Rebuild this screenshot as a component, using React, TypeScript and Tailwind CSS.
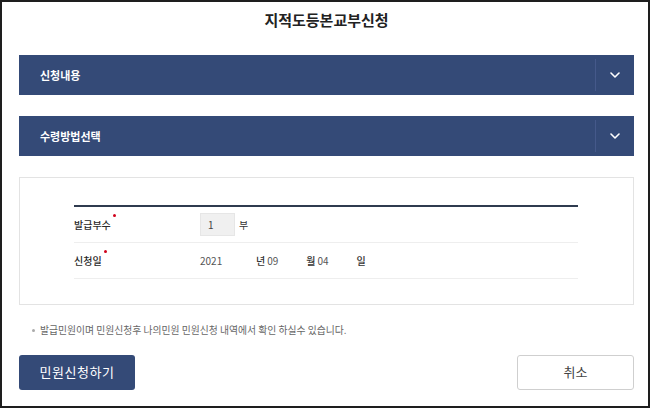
const font = "font-['Noto_Sans_CJK_KR','Noto_Sans',sans-serif]";

function Chevron() {
  return (
    <svg width="10" height="6" viewBox="0 0 10 6" fill="none">
      <path d="M1 1l4 4 4-4" stroke="white" strokeWidth="1.6" strokeLinecap="round" strokeLinejoin="round" />
    </svg>
  );
}

function Bar({ title }: { title: string }) {
  return (
    <div className="h-[40px] bg-[#344a77] flex items-center">
      <span className="flex-1 pl-[21px] text-[11px] font-bold text-white">{title}</span>
      <div className="h-[32px] w-px bg-[#45598a]" />
      <div className="w-[38px] flex justify-center">
        <Chevron />
      </div>
    </div>
  );
}

function Label({ text }: { text: string }) {
  return (
    <div className="w-[126px] text-[10px] font-medium text-[#2a2a2a]">
      <span className="relative">
        {text}
        <span className="absolute -right-[5px] -top-[3px] w-[3px] h-[3px] rounded-full bg-[#d0021b]" />
      </span>
    </div>
  );
}

export default function App() {
  return (
    <div className={`w-[650px] h-[408px] border-2 border-[#1e1e1e] bg-white pl-[17px] pr-[14px] ${font}`}>
      {/* 제목 */}
      <h1 className="mt-[6px] h-[24px] leading-[24px] text-center text-[15px] font-bold text-[#222]">
        지적도등본교부신청
      </h1>

      <div className="mt-[23px] flex flex-col gap-[21px]">
        <Bar title="신청내용" />
        <Bar title="수령방법선택" />
      </div>

      {/* 입력 영역 */}
      <div className="mt-[21px] h-[128px] border border-[#e3e3e3] pl-[54px] pr-[55px] pt-[27px]">
        <div className="border-t-2 border-[#2f3b4f]">
          <div className="h-[36px] flex items-center border-b border-[#eeeeee]">
            <Label text="발급부수" />
            <div className="w-[35px] h-[23px] bg-[#f0f0f0] border border-[#e6e6e6] flex items-center pl-[7px] text-[10px] text-[#444]">
              1
            </div>
            <span className="ml-[4px] text-[10px] text-[#333]">부</span>
          </div>
          <div className="h-[36px] flex items-center border-b border-[#eeeeee]">
            <Label text="신청일" />
            <span className="w-[56px] text-[10px] text-[#555]">2021</span>
            <span className="text-[10px] font-medium text-[#333]">년</span>
            <span className="ml-[2px] w-[39px] text-[10px] text-[#555]">09</span>
            <span className="text-[10px] font-medium text-[#333]">월</span>
            <span className="ml-[2px] w-[39px] text-[10px] text-[#555]">04</span>
            <span className="text-[10px] font-medium text-[#333]">일</span>
          </div>
        </div>
      </div>

      {/* 안내 */}
      <p className="mt-[18px] pl-[13px] text-[9.8px] text-[#666] flex items-center gap-[5px]">
        <span className="w-[3px] h-[3px] rounded-full bg-[#aaa]" />
        발급민원이며 민원신청후 나의민원 민원신청 내역에서 확인 하실수 있습니다.
      </p>

      {/* 버튼 */}
      <div className="mt-[17px] flex justify-between">
        <button className="w-[116px] h-[35px] rounded-[3px] bg-[#344a77] text-white text-[13px] tracking-[0.5px]">
          민원신청하기
        </button>
        <button className="w-[117px] h-[35px] rounded-[3px] bg-white border border-[#cfcfcf] text-[#444] text-[13px]">
          취소
        </button>
      </div>
    </div>
  );
}
